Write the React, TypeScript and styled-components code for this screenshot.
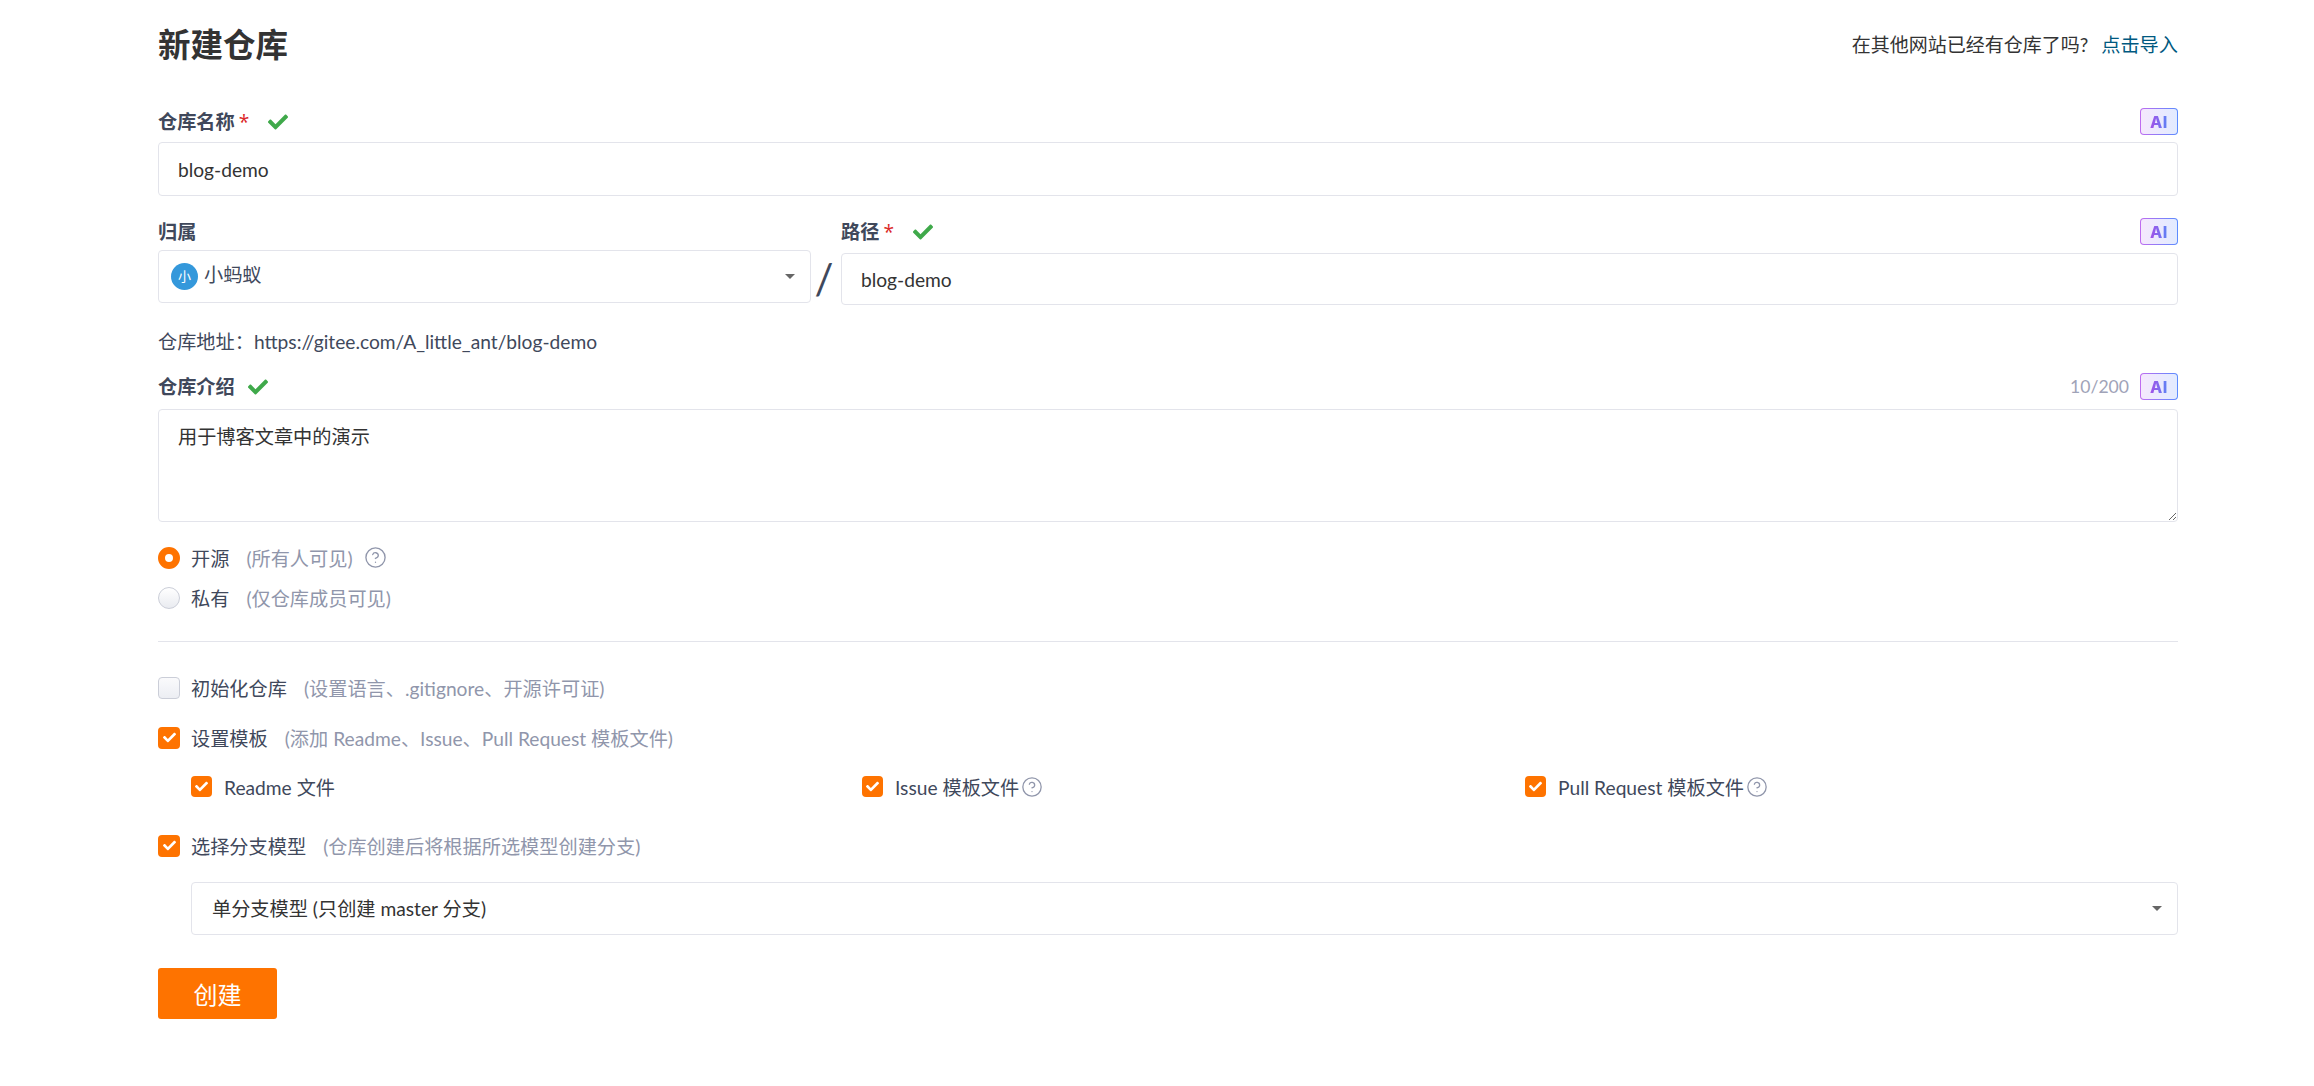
import React from 'react';
import styled, { createGlobalStyle } from 'styled-components';
import { FaCheck } from 'react-icons/fa';
import { HelpCircle } from 'lucide-react';

const GlobalStyle = createGlobalStyle`
  html, body {
    margin: 0;
    background: #fff;
  }
  body {
    font-family: "Lato", "Noto Sans CJK SC", sans-serif;
    font-size: 19.2px;
    color: #40485b;
  }
`;

const Page = styled.div`
  width: 2020px;
  margin-left: 158px;
  padding-top: 23px;
  height: 1063px;
  overflow: hidden;
`;

const Header = styled.div`
  display: flex;
  justify-content: space-between;
  align-items: center;
  height: 44px;
  margin-bottom: 41px;
`;

const Title = styled.h1`
  margin: 0;
  font-size: 32.5px;
  line-height: 44px;
  font-weight: 700;
  color: #333;
`;

const ImportHint = styled.div`
  display: flex;
  gap: 13px;
  line-height: 27px;
  padding-bottom: 2px;
  color: #333;
`;

const ImportQuestion = styled.span`
  font-size: 19px;
`;

const ImportLink = styled.a`
  color: #005980;
`;

const LabelRow = styled.div<{ $mb?: number }>`
  display: flex;
  align-items: center;
  height: 27px;
  margin-bottom: ${p => p.$mb ?? 7}px;
`;

const Label = styled.label`
  font-weight: 700;
  color: #40485b;
  line-height: 27px;
`;

const Required = styled.span`
  font-family: "Open Sans", sans-serif;
  color: #db2828;
  margin-left: 4px;
  font-weight: 400;
`;

const Valid = styled(FaCheck)<{ $ml?: number }>`
  color: #3fa94a;
  font-size: 20px;
  margin-left: ${p => p.$ml ?? 19}px;
`;

const Spacer = styled.div`
  flex: 1;
`;

const Counter = styled.span`
  color: #a0a3b8;
  font-size: 17.6px;
  margin-right: 11px;
`;

const AiBadge = styled.span`
  box-sizing: border-box;
  width: 38px;
  height: 27px;
  display: flex;
  align-items: center;
  justify-content: center;
  border: 1px solid transparent;
  border-radius: 4px;
  background:
    linear-gradient(90deg, #f5e8fd, #e2ebff) padding-box,
    linear-gradient(90deg, #c06cf0, #5b8cff) border-box;
`;

const AiText = styled.span`
  font-family: "Inter", sans-serif;
  font-size: 16px;
  font-weight: 800;
  letter-spacing: 0.6px;
  line-height: 1;
  background: linear-gradient(90deg, #a450e8, #5b84f5);
  -webkit-background-clip: text;
  background-clip: text;
  color: transparent;
`;

const TextInput = styled.input<{ $h?: number }>`
  display: block;
  box-sizing: border-box;
  width: 100%;
  height: ${p => p.$h ?? 54}px;
  padding: 0 19px;
  border: 1px solid #e3e4eb;
  border-radius: 4px;
  outline: none;
  font: inherit;
  color: #333;
  background: #fff;
`;

const Field = styled.div<{ $mb?: number }>`
  margin-bottom: ${p => p.$mb ?? 22}px;
`;

const OwnerRow = styled.div`
  display: grid;
  grid-template-columns: 653px 30px 1fr;
  margin-bottom: 23px;
`;

const Slash = styled.div`
  display: flex;
  align-items: flex-end;
  justify-content: center;
  height: 87px;
  padding-right: 4px;
  font-size: 42px;
  line-height: 54px;
  color: #40485b;
`;

const SelectBox = styled.div<{ $pl?: number }>`
  box-sizing: border-box;
  display: flex;
  align-items: center;
  height: 53px;
  padding-left: ${p => p.$pl ?? 12}px;
  padding-right: 15px;
  border: 1px solid #e3e4eb;
  border-radius: 4px;
`;

const Avatar = styled.span`
  width: 27px;
  height: 27px;
  flex: none;
  border-radius: 50%;
  background: #3498db;
  color: #fff;
  font-size: 13px;
  line-height: 27px;
  text-align: center;
  margin-right: 6px;
`;

const SelectText = styled.span<{ $up?: number; $muted?: boolean }>`
  position: relative;
  top: -${p => p.$up ?? 1}px;
  color: ${p => (p.$muted ? '#40485b' : '#333')};
`;

const Caret = styled.span`
  width: 0;
  height: 0;
  margin-left: auto;
  border-left: 5px solid transparent;
  border-right: 5px solid transparent;
  border-top: 5px solid #666;
`;

const AddressLine = styled.div`
  line-height: 27px;
  margin-bottom: 18px;
  color: #40485b;
`;

const Area = styled.textarea`
  display: block;
  box-sizing: border-box;
  width: 100%;
  height: 113px;
  padding: 13px 19px;
  border: 1px solid #e3e4eb;
  border-radius: 4px;
  outline: none;
  font: inherit;
  line-height: 27px;
  color: #333;
  resize: vertical;
`;

const OptionRow = styled.div<{ $mb?: number }>`
  display: flex;
  align-items: center;
  height: 27px;
  margin-bottom: ${p => p.$mb ?? 0}px;
  color: #40485b;
`;

const Radio = styled.span<{ $on?: boolean }>`
  box-sizing: border-box;
  flex: none;
  width: 22px;
  height: 22px;
  margin-right: 11px;
  border-radius: 50%;
  ${p =>
    p.$on
      ? 'background: #fff; border: 7px solid #fe7300;'
      : 'background: linear-gradient(#fff, #e9ebf0); border: 1px solid #cbced8;'}
`;

const Box = styled.span<{ $on?: boolean; $small?: boolean }>`
  box-sizing: border-box;
  flex: none;
  display: flex;
  align-items: center;
  justify-content: center;
  width: ${p => (p.$small ? 21 : 22)}px;
  height: ${p => (p.$small ? 21 : 22)}px;
  margin-right: ${p => (p.$small ? 12 : 11)}px;
  border-radius: 4px;
  color: #fff;
  font-size: 13px;
  ${p =>
    p.$on
      ? 'background: #fe7300;'
      : 'background: linear-gradient(#fafafc, #eceef3); border: 1px solid #cbced8;'}
`;

const Hint = styled.span`
  color: #9096ab;
  margin-left: 17px;
`;

const Help = styled(HelpCircle)<{ $ml?: number }>`
  color: #9096ab;
  margin-left: ${p => p.$ml ?? 11}px;
`;

const SubGrid = styled.div`
  display: grid;
  grid-template-columns: 671px 663px 1fr;
  margin-left: 33px;
  margin-bottom: 32px;
`;

const SubItem = styled.div`
  display: flex;
  align-items: center;
  height: 27px;
  color: #40485b;
`;

const Divider = styled.hr`
  height: 1px;
  margin: 30px 0 32px;
  border: 0;
  background: #e3e4eb;
`;

const Indented = styled.div`
  margin: 23px 0 33px 33px;
`;

const CreateButton = styled.button`
  display: block;
  width: 119px;
  height: 51px;
  padding: 0;
  border: 0;
  border-radius: 3px;
  background: #fe7300;
  color: #fff;
  font: inherit;
  font-size: 24px;
`;

const Check = ({ small }: { small?: boolean }) => (
  <Box $on $small={small}>
    <FaCheck />
  </Box>
);

const Ai = () => (
  <AiBadge>
    <AiText>AI</AiText>
  </AiBadge>
);

export default function App() {
  return (
    <Page>
      <GlobalStyle />
      <Header>
        <Title>新建仓库</Title>
        <ImportHint>
          <ImportQuestion>在其他网站已经有仓库了吗?</ImportQuestion>
          <ImportLink>点击导入</ImportLink>
        </ImportHint>
      </Header>

      <Field>
        <LabelRow>
          <Label>
            仓库名称<Required>*</Required>
          </Label>
          <Valid />
          <Spacer />
          <Ai />
        </LabelRow>
        <TextInput readOnly value="blog-demo" />
      </Field>

      <OwnerRow>
        <div>
          <LabelRow $mb={5}>
            <Label>归属</Label>
          </LabelRow>
          <SelectBox>
            <Avatar>小</Avatar>
            <SelectText $up={3} $muted>
              小蚂蚁
            </SelectText>
            <Caret />
          </SelectBox>
        </div>
        <Slash>/</Slash>
        <div>
          <LabelRow $mb={8}>
            <Label>
              路径<Required>*</Required>
            </Label>
            <Valid />
            <Spacer />
            <Ai />
          </LabelRow>
          <TextInput readOnly value="blog-demo" $h={52} />
        </div>
      </OwnerRow>

      <AddressLine>仓库地址{'\uFF1A'}https://gitee.com/A_little_ant/blog-demo</AddressLine>

      <Field $mb={22}>
        <LabelRow $mb={9}>
          <Label>仓库介绍</Label>
          <Valid $ml={13} />
          <Spacer />
          <Counter>10/200</Counter>
          <Ai />
        </LabelRow>
        <Area readOnly value="用于博客文章中的演示" />
      </Field>

      <OptionRow $mb={13}>
        <Radio $on />
        开源
        <Hint>(所有人可见)</Hint>
        <Help size={23} strokeWidth={1.4} />
      </OptionRow>
      <OptionRow>
        <Radio />
        私有
        <Hint>(仅仓库成员可见)</Hint>
      </OptionRow>

      <Divider />

      <OptionRow $mb={23}>
        <Box />
        初始化仓库
        <Hint>(设置语言、.gitignore、开源许可证)</Hint>
      </OptionRow>
      <OptionRow $mb={22}>
        <Check />
        设置模板
        <Hint>(添加 Readme、Issue、Pull Request 模板文件)</Hint>
      </OptionRow>

      <SubGrid>
        <SubItem>
          <Check small />
          Readme 文件
        </SubItem>
        <SubItem>
          <Check small />
          Issue 模板文件
          <Help size={22} strokeWidth={1.4} $ml={2} />
        </SubItem>
        <SubItem>
          <Check small />
          Pull Request 模板文件
          <Help size={22} strokeWidth={1.4} $ml={2} />
        </SubItem>
      </SubGrid>

      <OptionRow>
        <Check />
        选择分支模型
        <Hint>(仓库创建后将根据所选模型创建分支)</Hint>
      </OptionRow>

      <Indented>
        <SelectBox $pl={20}>
          <SelectText>单分支模型 (只创建 master 分支)</SelectText>
          <Caret />
        </SelectBox>
      </Indented>

      <CreateButton>创建</CreateButton>
    </Page>
  );
}
